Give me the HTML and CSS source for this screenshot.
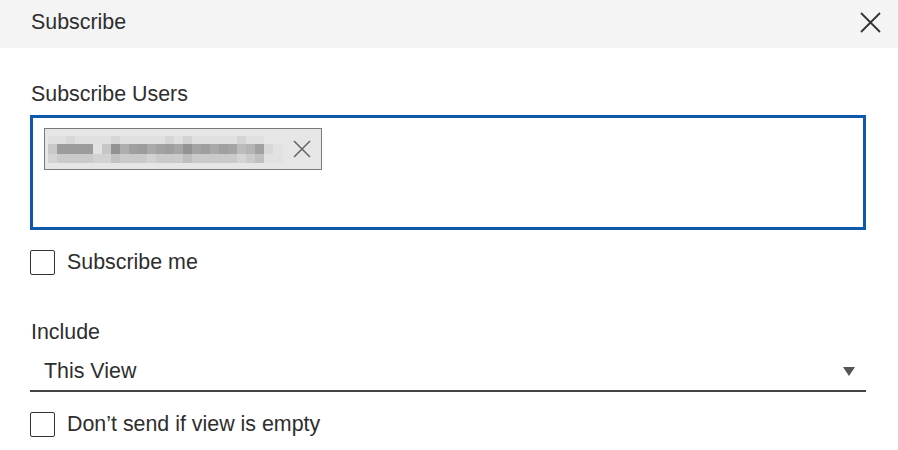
FILE: index.html
```html
<!DOCTYPE html>
<html lang="en">
<head>
  <meta charset="UTF-8">
  <meta name="viewport" content="width=device-width, initial-scale=1.0">
  <title>Subscribe</title>
  <link rel="stylesheet" href="styles.css">
</head>
<body>
  <div class="dialog">
    <header class="dialog-header">
      <span class="dialog-title">Subscribe</span>
      <button class="close-btn" aria-label="Close">
        <svg width="21" height="21" viewBox="0 0 21 21"><path d="M1 1L20 20M20 1L1 20" stroke="#333" stroke-width="1.8" fill="none"/></svg>
      </button>
    </header>

    <div class="dialog-body">
      <div class="field-label">Subscribe Users</div>
      <div class="user-input">
        <span class="chip">
          <!-- pixelated (redacted) email address -->
          <svg class="chip-blur" width="235" height="27" viewBox="0 0 235 27" shape-rendering="crispEdges">
            <rect x="0" y="0" width="235" height="8" fill="#e0e0e0"/>
            <rect x="18" y="0" width="9" height="8" fill="#d8d8d8"/>
            <rect x="63" y="0" width="9" height="8" fill="#d6d6d6"/>
            <rect x="117" y="0" width="9" height="8" fill="#d6d6d6"/>
            <rect x="135" y="0" width="9" height="8" fill="#d2d2d2"/>
            <rect x="189" y="0" width="9" height="8" fill="#d4d4d4"/>
            <rect x="216" y="0" width="19" height="8" fill="#e6e6e6"/>
            <rect x="0" y="8" width="9" height="10" fill="#c8c8c8"/>
            <rect x="9" y="8" width="36" height="10" fill="#9c9c9c"/>
            <rect x="45" y="8" width="9" height="10" fill="#e2e2e2"/>
            <rect x="54" y="8" width="9" height="10" fill="#c6c6c6"/>
            <rect x="63" y="8" width="9" height="10" fill="#929292"/>
            <rect x="72" y="8" width="9" height="10" fill="#aeaeae"/>
            <rect x="81" y="8" width="9" height="10" fill="#a0a0a0"/>
            <rect x="90" y="8" width="9" height="10" fill="#9c9c9c"/>
            <rect x="99" y="8" width="9" height="10" fill="#aaaaaa"/>
            <rect x="108" y="8" width="9" height="10" fill="#a2a2a2"/>
            <rect x="117" y="8" width="9" height="10" fill="#9e9e9e"/>
            <rect x="126" y="8" width="9" height="10" fill="#a6a6a6"/>
            <rect x="135" y="8" width="9" height="10" fill="#939393"/>
            <rect x="144" y="8" width="9" height="10" fill="#a4a4a4"/>
            <rect x="153" y="8" width="9" height="10" fill="#9e9e9e"/>
            <rect x="162" y="8" width="9" height="10" fill="#a9a9a9"/>
            <rect x="171" y="8" width="9" height="10" fill="#a0a0a0"/>
            <rect x="180" y="8" width="9" height="10" fill="#a4a4a4"/>
            <rect x="189" y="8" width="9" height="10" fill="#bcbcbc"/>
            <rect x="198" y="8" width="9" height="10" fill="#b4b4b4"/>
            <rect x="207" y="8" width="9" height="10" fill="#a0a0a0"/>
            <rect x="216" y="8" width="9" height="10" fill="#d8d8d8"/>
            <rect x="225" y="8" width="10" height="10" fill="#e2e2e2"/>
            <rect x="0" y="18" width="235" height="9" fill="#cacaca"/>
            <rect x="0" y="18" width="9" height="9" fill="#d4d4d4"/>
            <rect x="45" y="18" width="18" height="9" fill="#d2d2d2"/>
            <rect x="63" y="18" width="9" height="9" fill="#c2c2c2"/>
            <rect x="99" y="18" width="9" height="9" fill="#d2d2d2"/>
            <rect x="135" y="18" width="9" height="9" fill="#bebebe"/>
            <rect x="189" y="18" width="9" height="9" fill="#d4d4d4"/>
            <rect x="207" y="18" width="9" height="9" fill="#c0c0c0"/>
            <rect x="216" y="18" width="19" height="9" fill="#e2e2e2"/>
          </svg>
          <svg class="chip-remove" width="18" height="18" viewBox="0 0 18 18"><path d="M1 1L17 17M17 1L1 17" stroke="#666" stroke-width="1.6" fill="none"/></svg>
        </span>
      </div>

      <label class="check-row">
        <span class="checkbox"></span>
        <span class="check-text">Subscribe me</span>
      </label>

      <div class="field-label include-label">Include</div>
      <div class="select">
        <span class="select-value">This View</span>
        <span class="caret"></span>
      </div>

      <label class="check-row">
        <span class="checkbox"></span>
        <span class="check-text">Don’t send if view is empty</span>
      </label>
    </div>
  </div>
</body>
</html>
```

FILE: styles.css
```css
body {
  margin: 0;
  padding: 0;
  background-color: #fff;
  color: #2e2e2e;
  font-family: "Liberation Sans", Arial, sans-serif;
  font-size: 21.4px;
}
.dialog {
  width: 898px;
}
.dialog-header {
  display: flex;
  align-items: center;
  justify-content: space-between;
  height: 48px;
  box-sizing: border-box;
  padding: 0 17px 4px 31px;
  background-color: #f4f4f4;
}
.dialog-title {
  line-height: 44px;
}
.close-btn {
  display: flex;
  padding: 0;
  border: none;
  background: none;
  cursor: pointer;
}
.dialog-body {
  padding: 34px 32px 0 30px;
}
.field-label {
  line-height: 24px;
  margin-bottom: 9px;
  padding-left: 1px;
}
.include-label {
  margin-top: 45px;
  margin-bottom: 0;
}
.user-input {
  height: 115px;
  box-sizing: border-box;
  border: 3px solid #0f5aa8;
  padding: 10px 11px;
}
.chip {
  display: inline-flex;
  align-items: center;
  height: 42px;
  box-sizing: border-box;
  padding: 0 10px 0 3px;
  border: 1px solid #7a7a7a;
  background-color: #e6e6e6;
}
.chip-blur {
  display: block;
  margin-right: 10px;
}
.chip-remove {
  display: block;
  cursor: pointer;
}
.check-row {
  display: flex;
  align-items: center;
  margin-top: 20px;
  cursor: pointer;
}
.checkbox {
  width: 25px;
  height: 25px;
  box-sizing: border-box;
  border: 1px solid #333;
  border-radius: 2px;
  background-color: #fff;
  flex-shrink: 0;
}
.check-text {
  margin-left: 12px;
  line-height: 21px;
}
.select {
  display: flex;
  align-items: center;
  justify-content: space-between;
  padding: 15px 11px 7px 14px;
  border-bottom: 2px solid #444;
}
.select-value {
  line-height: 24px;
}
.caret {
  width: 0;
  height: 0;
  margin-top: 1px;
  border-left: 6.5px solid transparent;
  border-right: 6.5px solid transparent;
  border-top: 9px solid #555;
}
```
